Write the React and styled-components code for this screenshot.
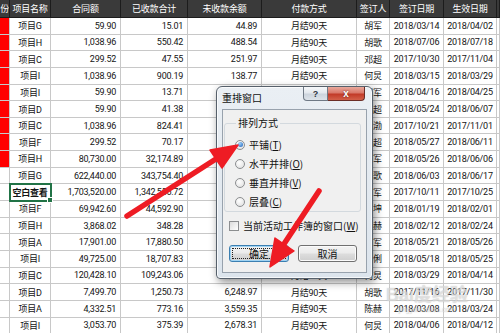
import React from 'react';
import styled, { createGlobalStyle, css } from 'styled-components';

const Global = createGlobalStyle`
  html, body { margin: 0; padding: 0; background: #fff; }
  body {
    width: 500px; height: 333px; overflow: hidden;
    font-family: Roboto, "Noto Sans CJK SC", sans-serif;
  }
`;

const COLS = '10px 41px 70px 67px 74px 95px 33px 54px 53px 3px';

const Page = styled.div`
  position: relative;
  width: 500px;
  height: 333px;
  overflow: hidden;
`;

const Sheet = styled.div`
  display: grid;
  grid-template-columns: ${COLS};
  grid-template-rows: 18px repeat(19, 16.65px);
`;

const HeadCell = styled.div`
  box-sizing: border-box;
  background: #3a3a3a;
  color: #fff;
  border-right: 1px solid #1c1c1c;
  border-bottom: 1px solid #1c1c1c;
  display: flex;
  align-items: center;
  justify-content: ${(p) => (p.$clip ? 'flex-end' : 'center')};
  font-family: "Noto Sans CJK SC", sans-serif;
  font-size: 9px;
  letter-spacing: -0.2px;
  white-space: nowrap;
  overflow: hidden;
`;

const Cell = styled.div`
  position: relative;
  box-sizing: border-box;
  border-right: 1px solid #c8c8c8;
  border-bottom: 1px solid #c8c8c8;
  display: flex;
  align-items: center;
  justify-content: ${(p) => (p.$align === 'right' ? 'flex-end' : 'center')};
  padding: ${(p) => (p.$align === 'right' ? '0 4px 0 0' : '0')};
  background: ${(p) => p.$fill || '#fff'};
  color: #141414;
  font-size: 9px;
  letter-spacing: -0.25px;
  white-space: nowrap;
  overflow: visible;
  ${(p) =>
    p.$selected &&
    css`
      outline: 2px solid #217346;
      outline-offset: -1px;
      z-index: 1;
      font-weight: 700;
      &::after {
        content: '';
        position: absolute;
        right: -3px;
        bottom: -3px;
        width: 4px;
        height: 4px;
        background: #217346;
        border: 1px solid #fff;
      }
    `}
`;

const Dialog = styled.div`
  position: absolute;
  left: 216px;
  top: 86px;
  width: 157px;
  height: 193px;
  box-sizing: border-box;
  border: 1px solid #56606b;
  border-radius: 6px 6px 4px 4px;
  background: linear-gradient(#eaeff4, #dce4ec);
  box-shadow: 2px 3px 9px rgba(0, 0, 0, 0.45), inset 0 0 0 1px rgba(255, 255, 255, 0.75);
  display: flex;
  flex-direction: column;
  font-family: "Noto Sans CJK SC", sans-serif;
  color: #111;
  z-index: 2;
`;

const TitleBar = styled.div`
  height: 22px;
  display: flex;
  align-items: flex-start;
  justify-content: space-between;
  padding: 0 7px 0 5px;
`;

const Title = styled.span`
  font-size: 10px;
  line-height: 10px;
  margin-top: 6px;
`;

const Caption = styled.div`
  display: flex;
`;

const CapBtn = styled.div`
  box-sizing: border-box;
  height: 14px;
  display: flex;
  align-items: center;
  justify-content: center;
  font-family: "Liberation Sans", sans-serif;
  font-weight: 700;
  line-height: 10px;
  ${(p) =>
    p.$close
      ? css`
          width: 37px;
          border: 1px solid #6b2d26;
          border-top: none;
          border-left: none;
          border-radius: 0 0 4px 0;
          background: linear-gradient(#e9a99c 0%, #d9786a 45%, #c23a28 55%, #d3604a 100%);
          color: #fff;
          font-size: 10px;
          text-shadow: 0 0 2px #5a1b14;
        `
      : css`
          width: 25px;
          border: 1px solid #6f7985;
          border-top: none;
          border-radius: 0 0 0 4px;
          background: linear-gradient(#f6f8fa 0%, #e3e8ee 45%, #ccd4dd 55%, #dde3ea 100%);
          color: #2c3440;
          font-size: 9px;
        `}
`;

const Content = styled.div`
  margin: 0 5px 5px;
  flex: 1;
  background: #f0f0f0;
  border: 1px solid #98a2ad;
  display: flex;
  flex-direction: column;
`;

const Group = styled.fieldset`
  margin: 7px 5px 0 1px;
  padding: 6px 0 0 10px;
  border: 1px solid #d3d9de;
  border-radius: 3px;
  min-width: 0;
`;

const Legend = styled.legend`
  padding: 0 2px;
  margin-left: 1px;
  font-size: 10px;
  line-height: 12px;
`;

const OptionRow = styled.div`
  height: 19px;
  display: flex;
  align-items: center;
  gap: 4px;
  font-size: 10px;
`;

const Radio = styled.span`
  box-sizing: border-box;
  width: 10px;
  height: 10px;
  border-radius: 50%;
  border: 1px solid #8c8e90;
  background: radial-gradient(circle at 40% 35%, #ffffff, #dcdcdc);
  display: flex;
  align-items: center;
  justify-content: center;
  &::after {
    content: '';
    display: ${(p) => (p.$on ? 'block' : 'none')};
    width: 5px;
    height: 5px;
    border-radius: 50%;
    background: radial-gradient(circle at 35% 30%, #9fd2fa, #1e5fb8);
  }
`;

const CheckRow = styled.div`
  margin-top: 7px;
  height: 13px;
  padding-left: 6px;
  display: flex;
  align-items: center;
  gap: 4px;
  font-size: 10px;
`;

const Check = styled.span`
  box-sizing: border-box;
  width: 10px;
  height: 10px;
  border: 1px solid #8c8e90;
  background: linear-gradient(135deg, #dcdcdc, #ffffff);
`;

const U = styled.span`
  text-decoration: underline;
`;

const ButtonRow = styled.div`
  margin-top: 13px;
  padding-left: 6px;
  display: flex;
  gap: 9px;
`;

const Button = styled.div`
  position: relative;
  box-sizing: border-box;
  width: ${(p) => p.$w}px;
  height: 17px;
  border: 1px solid ${(p) => (p.$default ? '#3c7fb1' : '#707070')};
  border-radius: 3px;
  background: linear-gradient(#f3f3f3 0%, #ebebeb 48%, #dddddd 52%, #cfcfcf 100%);
  box-shadow: ${(p) => (p.$default ? 'inset 0 0 0 1px #9fd3f3' : 'inset 0 0 0 1px #fbfbfb')};
  display: flex;
  align-items: center;
  justify-content: center;
  font-size: 10px;
  ${(p) =>
    p.$default &&
    css`
      &::after {
        content: '';
        position: absolute;
        inset: 2px;
        border: 1px dotted #222;
      }
    `}
`;

const Overlay = styled.svg`
  position: absolute;
  left: 0;
  top: 0;
  pointer-events: none;
  z-index: 3;
`;

const Watermark = styled.div`
  position: absolute;
  left: 386px;
  top: 285px;
  display: flex;
  flex-direction: column;
  align-items: center;
  color: rgba(255, 255, 255, 0.5);
  text-shadow: 0 0 1px rgba(120, 120, 120, 0.5);
  font-family: "Liberation Sans", "Noto Sans CJK SC", sans-serif;
  pointer-events: none;
  z-index: 1;
`;

const MarkBig = styled.span`
  font-size: 18px;
  line-height: 20px;
  font-weight: 700;
`;

const MarkSmall = styled.span`
  font-size: 7px;
  line-height: 9px;
`;

const headers = ['月份', '项目名称', '合同额', '已收款合计', '未收款余额', '付款方式', '签订人', '签订日期', '生效日期', ''];

const rows = [
  ['项目G', '59.90', '15.01', '44.89', '胡军', '2018/03/14', '2018/04/02'],
  ['项目H', '1,038.96', '550.42', '488.54', '胡歌', '2018/07/06', '2018/07/18'],
  ['项目C', '299.52', '47.55', '251.97', '邓超', '2017/10/30', '2017/11/04'],
  ['项目I', '1,038.96', '900.19', '138.77', '何炅', '2018/03/15', '2018/03/29'],
  ['项目I', '59.90', '13.71', '46.19', '胡军', '2018/04/16', '2018/04/25'],
  ['项目D', '59.90', '41.38', '18.52', '邓超', '2018/05/24', '2018/06/07'],
  ['项目C', '1,038.96', '824.41', '214.55', '黄渤', '2017/10/21', '2017/11/01'],
  ['项目F', '299.52', '70.17', '229.35', '邓超', '2018/05/27', '2018/06/11'],
  ['项目H', '80,730.00', '32,174.89', '48,555.11', '胡军', '2018/05/26', '2018/06/06'],
  ['项目G', '622,440.00', '343,754.40', '278,685.60', '胡歌', '2018/06/03', '2018/06/17'],
  ['空白查看', '1,703,520.00', '1,342,556.72', '360,963.28', '胡军', '2017/10/11', '2017/10/25'],
  ['项目F', '69,942.60', '44,592.90', '25,349.70', '刘坤', '2018/01/19', '2018/02/01'],
  ['项目H', '3,868.02', '348.28', '3,519.74', '陈赫', '2018/02/12', '2018/02/24'],
  ['项目A', '17,901.00', '17,880.50', '20.50', '胡军', '2018/05/21', '2018/05/26'],
  ['项目I', '49,725.00', '18,707.83', '31,017.17', '孙俐', '2018/05/18', '2018/05/25'],
  ['项目C', '120,428.10', '109,243.06', '11,185.04', '何炅', '2018/03/29', '2018/04/14'],
  ['项目D', '7,499.70', '1,250.73', '6,248.97', '胡歌', '2017/11/16', '2017/11/30'],
  ['项目A', '4,332.51', '773.16', '3,559.35', '陈赫', '2018/03/08', '2018/03/24'],
  ['项目I', '3,053.70', '375.39', '2,678.31', '何炅', '2018/04/06', '2018/04/12'],
];

export default function App() {
  return (
    <Page>
      <Global />
      <Sheet>
        {headers.map((h, i) => (
          <HeadCell key={'h' + i} $clip={i === 0}>
            {h}
          </HeadCell>
        ))}
        {rows.map((r, i) => {
          // cells whose text lies entirely beneath the dialog stay empty
          const covered = i >= 4 && i <= 14;
          return (
            <React.Fragment key={i}>
              <Cell $fill={i < 9 ? '#ff0000' : '#fff'} />
              <Cell $selected={i === 10}>{r[0]}</Cell>
              <Cell $align="right">{r[1]}</Cell>
              <Cell $align="right">{r[2]}</Cell>
              <Cell $align="right">{covered ? null : r[3]}</Cell>
              <Cell>{covered ? null : '月结90天'}</Cell>
              <Cell>{r[4]}</Cell>
              <Cell>{r[5]}</Cell>
              <Cell>{r[6]}</Cell>
              <Cell />
            </React.Fragment>
          );
        })}
      </Sheet>

      <Dialog>
        <TitleBar>
          <Title>重排窗口</Title>
          <Caption>
            <CapBtn>?</CapBtn>
            <CapBtn $close>x</CapBtn>
          </Caption>
        </TitleBar>
        <Content>
          <Group>
            <Legend>排列方式</Legend>
            <OptionRow>
              <Radio $on />
              <span>平铺(<U>T</U>)</span>
            </OptionRow>
            <OptionRow>
              <Radio />
              <span>水平并排(<U>O</U>)</span>
            </OptionRow>
            <OptionRow>
              <Radio />
              <span>垂直并排(<U>V</U>)</span>
            </OptionRow>
            <OptionRow>
              <Radio />
              <span>层叠(<U>C</U>)</span>
            </OptionRow>
          </Group>
          <CheckRow>
            <Check />
            <span>当前活动工作簿的窗口(<U>W</U>)</span>
          </CheckRow>
          <ButtonRow>
            <Button $w={60} $default>确定</Button>
            <Button $w={59}>取消</Button>
          </ButtonRow>
        </Content>
      </Dialog>

      <Watermark>
        <MarkBig>Bai度经验</MarkBig>
        <MarkSmall>jingyan.baidu.com</MarkSmall>
      </Watermark>

      <Overlay width="500" height="333" viewBox="0 0 500 333">
        <g fill="#ee1c24" stroke="#ee1c24" strokeLinejoin="round">
          <line x1="127" y1="216" x2="219" y2="157" strokeWidth="5.5" strokeLinecap="round" />
          <polygon points="238,145 222,168 210,150" strokeWidth="1.5" />
          <line x1="319" y1="191" x2="282" y2="247" strokeWidth="5.5" strokeLinecap="round" />
          <polygon points="270,267 294,251 275,238" strokeWidth="1.5" />
        </g>
      </Overlay>
    </Page>
  );
}
